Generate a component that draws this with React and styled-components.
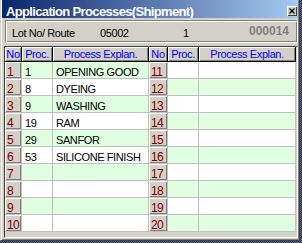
import React from 'react';
import styled, { createGlobalStyle } from 'styled-components';

const Global = createGlobalStyle`
  *, *::before, *::after { box-sizing: border-box; }
  html, body { margin: 0; padding: 0; }
  body {
    width: 302px;
    height: 243px;
    overflow: hidden;
    background: repeating-conic-gradient(#1e2550 0 25%, #6a6e86 0 50%) 0 0 / 2px 2px;
    font-family: "Liberation Sans", Arial, sans-serif;
  }
`;

const Window = styled.div`
  width: 300px;
  height: 241px;
  background: #d4d0c8;
  border-left: 1px solid #d4d0c8;
  border-right: 1px solid #404040;
  border-bottom: 1px solid #404040;
  box-shadow: inset 1px 0 #fff, inset -1px -1px #808080;
  padding: 0 1px 1px 1px;
  display: flex;
  flex-direction: column;
`;

const TitleBar = styled.div`
  flex: none;
  height: 18px;
  background: linear-gradient(to right, #0a246a, #a6caf0);
  display: flex;
  align-items: flex-start;
  padding: 5px 1px 0 4px;
  overflow: hidden;
`;

const Title = styled.span`
  flex: 1;
  color: #fff;
  font: bold 13px/14px "Liberation Sans", Arial, sans-serif;
  letter-spacing: -0.65px;
  white-space: nowrap;
`;

const CloseButton = styled.div`
  flex: none;
  width: 10px;
  height: 10px;
  margin-top: 1px;
  background: #d4d0c8;
  box-shadow: inset 1px 1px #fff, inset -1px -1px #404040;
  display: flex;
  align-items: center;
  justify-content: center;
`;

const InfoPanel = styled.div`
  flex: none;
  height: 23px;
  margin: 2px 0 0 3px;
  border: 1px solid;
  border-color: #808080 #fff #fff #808080;
  box-shadow: inset 1px 1px #fff, inset -1px -1px #808080;
  display: flex;
  align-items: flex-start;
  padding: 6px 8px 0 6px;
  font-size: 11px;
  line-height: 12px;
  letter-spacing: -0.4px;
  color: #000;
`;

const Field = styled.span`
  flex: ${p => (p.$w ? 'none' : '1')};
  width: ${p => (p.$w ? `${p.$w}px` : 'auto')};
  white-space: nowrap;
`;

const LotCount = styled.span`
  flex: none;
  margin-top: -2px;
  font-size: 12px;
  font-weight: bold;
  letter-spacing: 0;
  color: #808080;
`;

const Grid = styled.div`
  flex: none;
  height: 192px;
  margin: 3px 0 0 2px;
  border: 1px solid;
  border-color: #404040 #fff #fff #404040;
  display: grid;
  grid-template-columns: 17px 31px 96px 19px 31px 97px;
  grid-template-rows: 15px repeat(10, 17px);
  align-content: start;
`;

const HeadCell = styled.div`
  background: #d4d0c8;
  color: #0000ff;
  font-size: 11px;
  line-height: 14px;
  letter-spacing: -0.4px;
  text-align: center;
  white-space: nowrap;
  overflow: hidden;
  border-right: 1px solid #000;
  border-bottom: 1px solid #000;
  box-shadow: inset 1px 1px #fff, inset -1px -1px #808080;
`;

const NumCell = styled.div`
  background: #d4d0c8;
  color: #800000;
  font-size: 12px;
  line-height: 12px;
  letter-spacing: -0.6px;
  padding: 4px 0 0 2px;
  border-right: 1px solid #c0c0c0;
  border-bottom: 1px solid #c0c0c0;
  box-shadow: inset 1px 1px #fff, inset -1px -1px #808080;
  white-space: nowrap;
`;

const Cell = styled.div`
  background: ${p => (p.$alt ? '#e0ffe0' : '#ffffff')};
  color: #000;
  font-size: 11px;
  line-height: 12px;
  letter-spacing: -0.4px;
  padding: 4px 0 0 3px;
  border-right: 1px solid #c0c0c0;
  border-bottom: 1px solid #c0c0c0;
  white-space: nowrap;
  overflow: hidden;
`;

const left = [
  ['1', 'OPENING GOOD'],
  ['8', 'DYEING'],
  ['9', 'WASHING'],
  ['19', 'RAM'],
  ['29', 'SANFOR'],
  ['53', 'SILICONE FINISH'],
  ['', ''],
  ['', ''],
  ['', ''],
  ['', ''],
];

const headers = ['No', 'Proc.', 'Process Explan.', 'No', 'Proc.', 'Process Explan.'];

export default function App() {
  return (
    <>
      <Global />
      <Window>
        <TitleBar>
          <Title>Application Processes(Shipment)</Title>
          <CloseButton>
            <svg width="6" height="6" viewBox="0 0 6 6">
              <path d="M0.5 0.5 L5.5 5.5 M5.5 0.5 L0.5 5.5" stroke="#000" strokeWidth="1.4" />
            </svg>
          </CloseButton>
        </TitleBar>
        <InfoPanel>
          <Field $w={88}>Lot No/ Route</Field>
          <Field $w={83}>05002</Field>
          <Field>1</Field>
          <LotCount>000014</LotCount>
        </InfoPanel>
        <Grid>
          {headers.map((h, i) => (
            <HeadCell key={`h${i}`}>{h}</HeadCell>
          ))}
          {left.map(([proc, expl], i) => (
            <React.Fragment key={i}>
              <NumCell>{i + 1}</NumCell>
              <Cell $alt={i % 2 === 0}>{proc}</Cell>
              <Cell $alt={i % 2 === 0}>{expl}</Cell>
              <NumCell>{i + 11}</NumCell>
              <Cell $alt={i % 2 === 1} />
              <Cell $alt={i % 2 === 1} />
            </React.Fragment>
          ))}
        </Grid>
      </Window>
    </>
  );
}
